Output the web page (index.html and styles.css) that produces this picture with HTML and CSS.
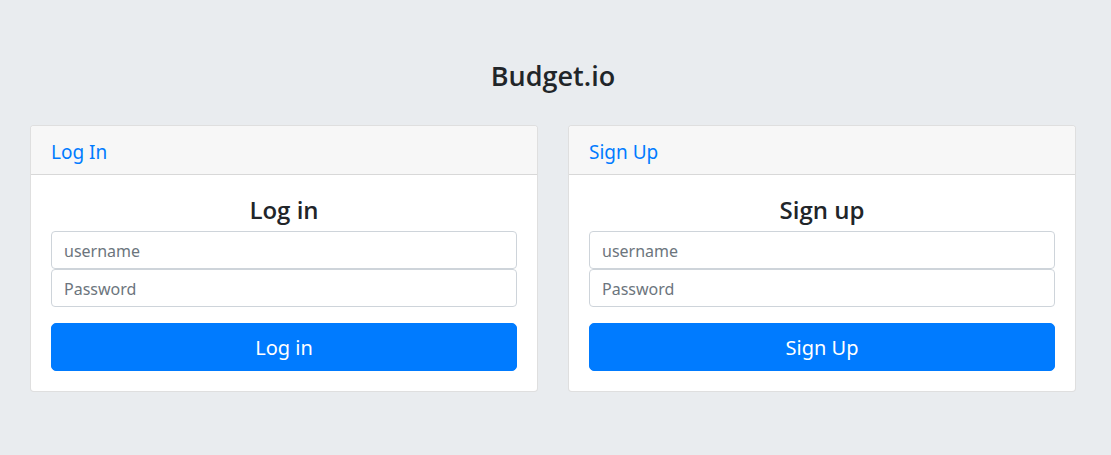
FILE: index.html
```html
<!DOCTYPE html>
<html lang="en">
<head>
<meta charset="utf-8">
<title>Budget.io</title>
<link rel="stylesheet" href="styles.css">
</head>
<body>
  <main class="page">
    <h1 class="brand">Budget.io</h1>
    <div class="cards">
      <section class="card">
        <header class="card-header"><a class="card-link" href="#">Log In</a></header>
        <div class="card-body">
          <h2 class="form-title">Log in</h2>
          <form class="auth-form">
            <div class="field-group">
              <input class="field" type="text" placeholder="username">
              <input class="field" type="password" placeholder="Password">
            </div>
            <button class="btn" type="button">Log in</button>
          </form>
        </div>
      </section>
      <section class="card">
        <header class="card-header"><a class="card-link" href="#">Sign Up</a></header>
        <div class="card-body">
          <h2 class="form-title">Sign up</h2>
          <form class="auth-form">
            <div class="field-group">
              <input class="field" type="text" placeholder="username">
              <input class="field" type="password" placeholder="Password">
            </div>
            <button class="btn" type="button">Sign Up</button>
          </form>
        </div>
      </section>
    </div>
  </main>
</body>
</html>
```
FILE: styles.css
```css
* { box-sizing: border-box; }
html, body { margin: 0; padding: 0; }
body {
  background: #e9ecef;
  font-family: "Noto Sans", "Open Sans", sans-serif;
  color: #212529;
  font-size: 16px;
  line-height: 1.5;
}
.page {
  padding: 57px 35px 0 30px;
}
.brand {
  margin: 0 0 30px;
  text-align: center;
  font-family: "Open Sans", "Noto Sans", sans-serif;
  font-size: 27px;
  font-weight: 600;
  line-height: 38px;
}
.cards {
  display: grid;
  grid-template-columns: 1fr 1fr;
  gap: 30px;
}
.card {
  background: #fff;
  border: 1px solid rgba(0,0,0,.125);
  border-radius: 4px;
  overflow: hidden;
}
.card-header {
  background: #f7f7f7;
  border-bottom: 1px solid rgba(0,0,0,.125);
  padding: 12px 20px 9px;
  height: 49px;
}
.card-link {
  color: #007bff;
  text-decoration: none;
  font-size: 19px;
  line-height: 28px;
}
.card-body {
  padding: 20px;
}
.form-title {
  margin: 0 0 7px;
  text-align: center;
  font-family: "Open Sans", "Noto Sans", sans-serif;
  font-size: 24px;
  font-weight: 600;
  line-height: 29px;
}
.auth-form { margin: 0; }
.field-group {
  display: flex;
  flex-direction: column;
  margin-bottom: 16px;
}
.field {
  display: block;
  width: 100%;
  height: 38px;
  padding: 7px 12px 5px;
  font: inherit;
  font-size: 16px;
  color: #495057;
  background: #fff;
  border: 1px solid #ced4da;
  border-radius: 4px;
}
.field::placeholder { color: #6c757d; }
.btn {
  display: block;
  width: 100%;
  height: 48px;
  padding: 9px 16px 7px;
  font: inherit;
  font-size: 20px;
  line-height: 30px;
  color: #fff;
  background: #007bff;
  border: 1px solid #007bff;
  border-radius: 5px;
}
```
